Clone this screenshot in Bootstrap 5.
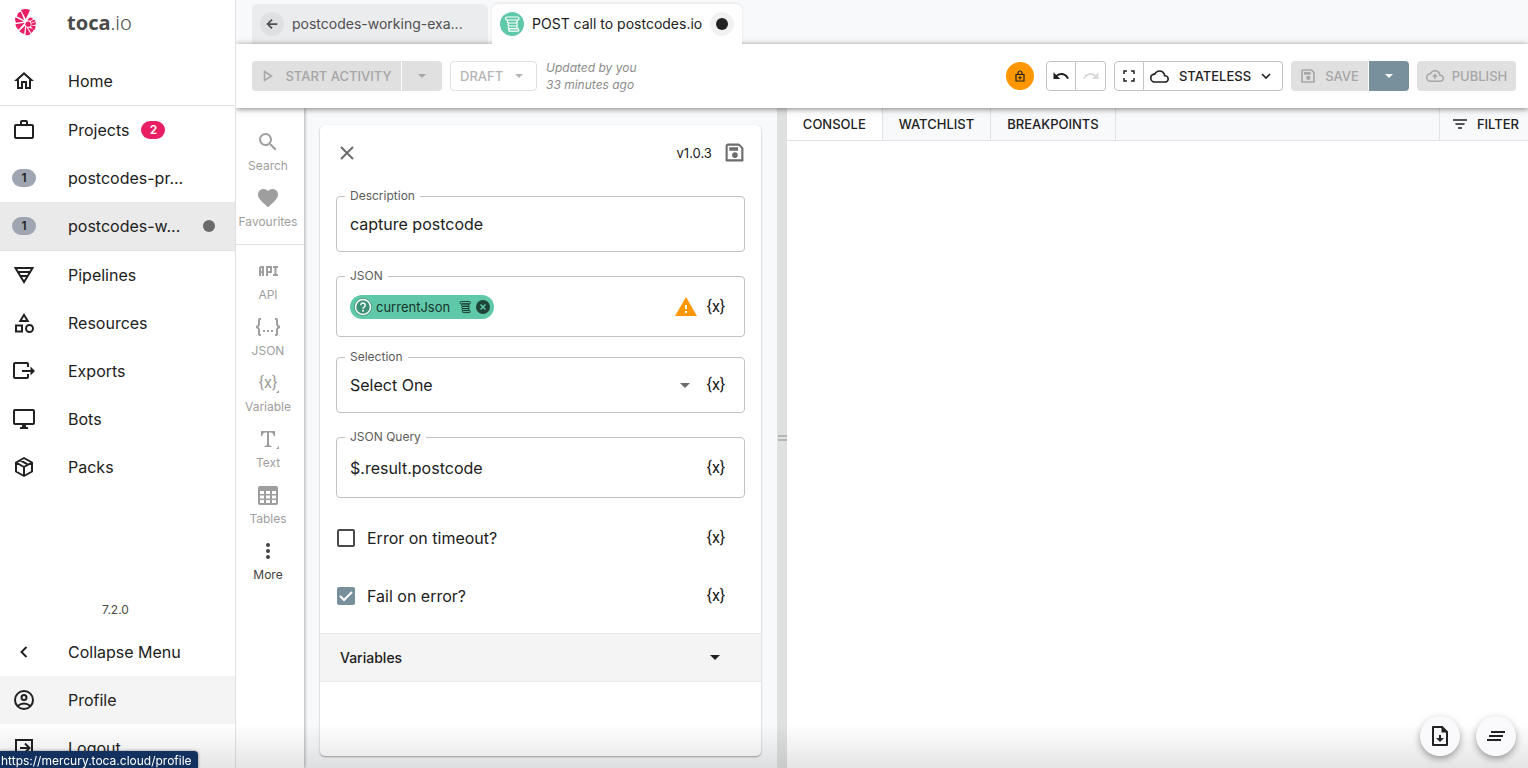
<!DOCTYPE html>
<html lang="en">
<head>
<meta charset="utf-8">
<meta name="viewport" content="width=device-width, initial-scale=1">
<title>toca.io - POST call to postcodes.io</title>
<link href="https://cdn.jsdelivr.net/npm/bootstrap@5.3.0/dist/css/bootstrap.min.css" rel="stylesheet">
<style>
  body { font-family: Inter, "Liberation Sans", sans-serif; font-size: 16px; line-height: 24px; color: #212121; background: #fff; white-space: nowrap; }
  a { color: inherit; text-decoration: none; }
  button { color: inherit; }
  svg { display: block; flex: none; fill: currentColor; }
  .ln { fill: none; stroke: currentColor; stroke-width: 2; }
  .i24 { width: 24px; height: 24px; }
  .i16 { width: 16px; height: 16px; }

  /* sidebar */
  .side { width: 236px; flex: none; border-right: 1px solid #e0e0e3; }
  .brand { height: 57px; padding: 0 12px 12px 15px; gap: 31px; color: #4a4a4a; font-family: "Noto Sans", sans-serif; font-size: 20px; }
  .brand svg { fill: #e91e63; }
  .item { height: 48px; padding: 0 12px; gap: 32px; }
  .item.on { background: #eaeaea; }
  .item.hov { background: #f4f4f4; }
  .rule { border-bottom: 1px solid #e2e2e5; }
  .pill { width: 24px; height: 18px; border-radius: 9px; font-size: 12px; line-height: 18px; font-weight: 600; text-align: center; background: #9fa6b2; flex: none; }
  .pill.hot { background: #e91e63; color: #fff; }
  .dot { width: 12px; height: 12px; border-radius: 50%; background: #6b6b6b; }
  .foot { margin-bottom: -4px; }
  .ver { font-size: 12px; color: #4a4a4a; padding: 0 4px 6px 0; }

  /* tabs and toolbar */
  .tabs { height: 44px; background: #f8f9fb; padding: 4px 16px 0; gap: 4px; }
  .tab { border-radius: 6px 6px 0 0; font-size: 14px; padding: 0 8px; gap: 8px; height: 40px; }
  .tab.back { background: #ebecee; color: #4f4f4f; width: 236px; }
  .tab.cur { background: #fff; width: 250px; position: relative; z-index: 3; box-shadow: 0 -1px 3px rgba(0,0,0,.08); }
  .disc { width: 24px; height: 24px; border-radius: 50%; flex: none; background: #dfe0e2; }
  .disc.green { background: #5fc8a8; color: #fff; }
  .disc.faint { background: #f1f1f1; }
  .disc .dot { background: #212121; }
  .bar { min-height: 64px; background: #fff; padding: 0 12px 0 16px; position: relative; z-index: 2; box-shadow: 0 1px 6px rgba(0,0,0,.5); }
  .tb { height: 30px; border: 0; border-radius: 4px; font-size: 13px; line-height: 30px; padding: 0 9px; font-weight: 500; background: #e0e0e0; color: #a6a6a6; display: flex; align-items: center; justify-content: center; }
  .tb.line { background: #fff; border: 1px solid #c4c4c4; color: #212121; }
  .tb.pale { border-color: #e0e0e0; color: #b5b5b5; width: 87px; }
  .tb.sq { width: 30px; padding: 0; }
  .tb.off { color: #dadada; }
  .tb.start { width: 149px; gap: 10px; }
  .tb.state { width: 139px; padding: 0 11px 0 6px; }
  .tb.save { width: 77px; gap: 9px; }
  .tb.pub { width: 99px; gap: 8px; }
  .l0 { border-top-left-radius: 0; border-bottom-left-radius: 0; }
  .r0 { border-top-right-radius: 0; border-bottom-right-radius: 0; }
  .tb.caret { width: 40px; margin-left: 1px; }
  .tb.slate { background: #78909c; color: #fff; }
  .note { font-size: 12px; line-height: 17px; font-style: italic; color: #8c8c8c; margin-left: 9px; }
  .lock { width: 28px; height: 28px; border: 0; border-radius: 50%; background: #ff9800; }

  /* tool strip */
  .strip { width: 68px; flex: none; padding-top: 16px; background: #fff; box-shadow: 1px 0 3px rgba(0,0,0,.3); position: relative; z-index: 1; }
  .tool { height: 56px; width: 64px; border: 0; background: none; padding: 6px 0; gap: 4px; font-size: 12px; line-height: 16px; color: #9e9e9e; }
  .tool.dark { color: #424242; }
  .glyph { height: 24px; line-height: 24px; font-size: 16px; font-family: Roboto, sans-serif; }
  .corner { position: absolute; right: -2px; bottom: 2px; width: 3px; height: 3px; }

  /* properties panel */
  .panel { flex: 0 0 36.6%; min-width: 0; background: #f8f9fb; padding: 17px 16px 12px; }
  .sheet { background: #fff; border-radius: 5px; box-shadow: 0 1px 2px rgba(0,0,0,.35); }
  .head { height: 55px; padding: 0 16px; }
  .version { font-size: 13px; }
  .grey { color: #6b6b6b; }
  .amber { color: #ff9800; }
  .fields { padding: 16px 16px 0; }
  .fld { position: relative; border: 1px solid #c2c2c2; border-radius: 4px; height: 56px; padding: 0 14px 0 13px; display: flex; align-items: center; margin-bottom: 24px; }
  .fld.tall { height: 61px; }
  .fld.near { margin-bottom: 20px; }
  .fld > label, .fld > .lbl { position: absolute; left: 8px; top: -9px; padding: 0 5px; font-size: 12px; line-height: 16px; background: #fff; color: #5c5c5c; }
  .fld input, .fld select { border: 0; background: none; outline: 0; padding: 0; flex: 1; min-width: 0; color: #212121; appearance: none; }
  .drop { margin-right: 12px; }
  .vx { border: 0; background: none; padding: 0; width: 28px; line-height: 24px; font-family: Roboto, sans-serif; font-size: 16px; text-align: center; }
  .chip { height: 24px; border-radius: 12px; background: #5fc8a8; padding: 0 4px; gap: 4px; font-size: 13px; color: #17352c; }
  .checks { padding: 11px 0 8px; }
  .opt { height: 58px; padding-right: 15px; gap: 12px; }
  .opt input { appearance: none; width: 18px; height: 18px; border: 2px solid #4a4a4a; border-radius: 2px; margin: 0 0 0 1px; }
  .opt input:checked { border: 0; background: #78909c url("data:image/svg+xml,%3Csvg xmlns='http://www.w3.org/2000/svg' viewBox='0 0 18 18'%3E%3Cpath d='M3 9l4 4 8-8' fill='none' stroke='white' stroke-width='2'/%3E%3C/svg%3E"); }
  .vars { height: 49px; border: 0; border-top: 1px solid #e8e8e8; border-bottom: 1px solid #e8e8e8; background: #f4f4f4; padding: 0 41px 0 20px; font-size: 14px; font-weight: 500; width: 100%; }
  .split { width: 10px; flex: none; background: #dfe1e0; }
  .grip { height: 6px; width: 9px; border-top: 2px solid #b5b5b5; border-bottom: 2px solid #b5b5b5; }

  /* console */
  .cons { flex: 1 1 0; min-width: 0; }
  .ctabs { height: 33px; background: #f8f9fb; border-bottom: 1px solid #e2e2e6; }
  .ctabs button { border: 0; border-right: 1px solid #e2e2e6; background: none; font-size: 13px; font-weight: 500; padding: 0 16px; line-height: 32px; }
  .ctabs .act { background: #fff; }
  .ctabs .flt { border-right: 0; border-left: 1px solid #e2e2e6; padding: 0 9px 0 12px; gap: 9px; }
  .fabs { position: fixed; right: 12px; bottom: 12px; gap: 16px; z-index: 6; }
  .fab { width: 40px; height: 40px; border: 0; border-radius: 50%; background: #fafafc; box-shadow: 0 3px 7px rgba(0,0,0,.35); }
  .fade-end { position: fixed; left: 0; right: 0; bottom: 0; height: 44px; background: linear-gradient(rgba(0,0,0,0), rgba(0,0,0,.1)); z-index: 5; pointer-events: none; }
  .status { position: fixed; left: 0; bottom: 0; height: 17px; width: 198px; padding-left: 1px; background: #12315f; color: #fff; font-size: 12px; line-height: 20px; border-radius: 0 4px 0 0; z-index: 7; box-shadow: 0 0 3px rgba(0,0,0,.5); overflow: hidden; }
</style>
</head>
<body class="vh-100 overflow-hidden d-flex">
<svg class="d-none">
  <symbol id="scroll" viewBox="0 0 18 18"><path d="M4 2h10.500a1.500 1.500 0 0 1 0 3H4a1.500 1.500 0 0 1 0-3zM5.500 5H14v3H6.500A1.500 1.500 0 0 1 5.500 5zM6.500 8H14v3H6.500a1.500 1.500 0 0 1 0-3zM6.500 11H14v2.600H6.500a1.300 1.300 0 0 1 0-2.600zM7 13.600h7.500a1.300 1.300 0 0 1 0 2.600H7a1.300 1.300 0 0 1 0-2.600z" fill="none" stroke="currentColor" stroke-width="1.200"/></symbol>
  <symbol id="save" viewBox="0 0 24 24"><path d="M4 3h13l4 4v14H3V4z" fill="none" stroke="currentColor" stroke-width="2.400" stroke-linejoin="round"/><path d="M6 6h10v4H6z"/><circle cx="12.500" cy="15" r="3.200"/></symbol>
  <symbol id="down" viewBox="0 0 10 5"><path d="M0 0h10L5 5z"/></symbol>
</svg>

<aside class="side d-flex flex-column overflow-hidden">
  <a href="#" class="brand d-flex align-items-center">
    <svg width="21" height="27" viewBox="0 0 64 82"><path d="M18 3Q32-3 46 3L33 30zM9 13q4-5 9-5l10 26L6 22zM1 25l26 13-24 4q-4-8-2-17zM1 46l29-4L10 63Q3 56 1 46zM31 50l-3 26q-8-1-15-9zM34 54l14 22q-8 5-16 4zM39 56l14 4q6 7-3 13zM47 50l16 2q0 9-6 13zM50 44l13-5v9l-13 1zM48 38l10-6q4 3 5 5l-14 5zM37 34l8-8q8 0 10 4l-8 6z"/><circle cx="40" cy="46" r="8"/></svg>
    <span><b class="fw-bold">toca</b><span class="fw-light">.io</span></span>
  </a>
  <nav>
    <a href="#" class="item d-flex align-items-center"><svg class="i24" viewBox="0 0 24 24"><path d="M12 5.690l5 4.500V18h-2v-6H9v6H7v-7.810l5-4.500M12 3L2 12h3v8h6v-6h2v6h6v-8h3L12 3z"/></svg>Home</a>
    <div class="rule"></div>
    <a href="#" class="item d-flex align-items-center"><svg class="i24" viewBox="0 0 24 24"><path d="M14 6V4h-4v2h4zM4 8v11h16V8H4zm16-2c1.110 0 2 .89 2 2v11c0 1.110-.89 2-2 2H4c-1.110 0-2-.89-2-2V8c0-1.110.89-2 2-2h4V4c0-1.110.89-2 2-2h4c1.110 0 2 .89 2 2v2h4z"/></svg><span class="d-flex align-items-center gap-2">Projects<span class="pill hot ms-1">2</span></span></a>
    <a href="#" class="item d-flex align-items-center"><span class="pill">1</span>postcodes-pr...</a>
    <a href="#" class="item on d-flex align-items-center"><span class="pill">1</span><span class="d-flex align-items-center flex-grow-1">postcodes-w...<span class="dot ms-auto me-2"></span></span></a>
    <div class="rule"></div>
    <a href="#" class="item d-flex align-items-center"><svg class="i24" viewBox="0 0 24 24"><path class="ln" d="M3.500 5h17L12 19zM5 9h14M8 13h8"/></svg>Pipelines</a>
    <a href="#" class="item d-flex align-items-center"><svg class="i24" viewBox="0 0 24 24"><path d="M12 2l-5.500 9h11L12 2zm0 3.840L13.930 9h-3.870L12 5.840zM17.500 13a4.500 4.500 0 1 0 0 9 4.500 4.500 0 0 0 0-9zm0 7a2.500 2.500 0 1 1 0-5 2.500 2.500 0 0 1 0 5zM3 21.500h8v-8H3v8zm2-6h4v4H5v-4z"/></svg>Resources</a>
    <a href="#" class="item d-flex align-items-center"><svg class="i24" viewBox="0 0 24 24"><path class="ln" d="M16 8V5q0-1-1-1H3Q2 4 2 5v13q0 1 1 1h12q1 0 1-1v-3M10 12h9"/><path d="M18.500 7.500L23 12l-4.500 4.500z"/></svg>Exports</a>
    <a href="#" class="item d-flex align-items-center"><svg class="i24" viewBox="0 0 24 24"><path d="M21 16H3V4h18m0-2H3c-1.110 0-2 .89-2 2v12a2 2 0 0 0 2 2h7v2H8v2h8v-2h-2v-2h7a2 2 0 0 0 2-2V4c0-1.110-.9-2-2-2z"/></svg>Bots</a>
    <a href="#" class="item d-flex align-items-center"><svg class="i24" viewBox="0 0 24 24"><path class="ln" stroke-linejoin="round" d="M12 3l8 4.500v9L12 21l-8-4.500v-9zM4 7.500l8 4.500 8-4.500M12 12v9M8 5.200l8 4.500"/></svg>Packs</a>
  </nav>
  <div class="foot mt-auto">
    <div class="ver text-center">7.2.0</div>
    <a href="#" class="item d-flex align-items-center"><svg class="i24" viewBox="0 0 24 24"><path class="ln" d="M14.500 7l-5 5 5 5"/></svg>Collapse Menu</a>
    <a href="#" class="item hov d-flex align-items-center"><svg class="i24" viewBox="0 0 24 24"><g class="ln"><circle cx="12" cy="12" r="9"/><circle cx="12" cy="9.500" r="2.500"/><path d="M5.500 18q6.500-5 13 0"/></g></svg>Profile</a>
    <a href="#" class="item d-flex align-items-center"><svg class="i24" viewBox="0 0 24 24"><path class="ln" d="M4 9V4h16v16H4v-5M4 9v8M8 12h10M13 7.500l4.500 4.500-4.500 4.500"/></svg>Logout</a>
  </div>
</aside>

<main class="flex-fill overflow-hidden d-flex flex-column">
  <div class="tabs d-flex">
    <a href="#" class="tab back d-flex align-items-center"><span class="disc d-flex align-items-center justify-content-center"><svg width="14" height="14" viewBox="0 0 16 16"><path class="ln" d="M14 8H3M8 3L3 8l5 5"/></svg></span>postcodes-working-exa...</a>
    <a href="#" class="tab cur d-flex align-items-center"><span class="disc green d-flex align-items-center justify-content-center"><svg width="18" height="18"><use href="#scroll"/></svg></span>POST call to postcodes.io<span class="disc faint ms-auto d-flex align-items-center justify-content-center"><span class="dot"></span></span></a>
  </div>

  <div class="bar d-flex align-items-center">
    <button class="tb r0 start"><svg width="14" height="14" viewBox="0 0 14 14"><path d="M3.500 2.500l7 4.500-7 4.500z" fill="none" stroke="currentColor" stroke-width="1.500"/></svg>START ACTIVITY</button>
    <button class="tb l0 caret" aria-label="Start options"><svg width="8" height="4"><use href="#down"/></svg></button>
    <button class="tb line pale ms-2 justify-content-between">DRAFT<svg class="me-1" width="8" height="4"><use href="#down"/></svg></button>
    <div class="note">Updated by you<br>33 minutes ago</div>

    <div class="ms-auto d-flex align-items-center gap-2">
      <button class="lock d-flex align-items-center justify-content-center me-1" aria-label="Locked"><svg width="10" height="12" viewBox="0 0 10 12"><path d="M1 4.500h8v6.500H1zM3 4.500V3a2 2 0 0 1 4 0v1.500" fill="none" stroke="currentColor" stroke-width="1.200"/><path d="M4.500 6h1v1.200h1.200v1H5.500v1.300h-1V8.200H3.300v-1h1.200z"/></svg></button>
      <div class="d-flex"><button class="tb line r0 sq" aria-label="Undo"><svg width="18" height="18" viewBox="0 0 24 24"><path id="undo" d="M12.500 8c-2.650 0-5.050.99-6.900 2.600L2 7v9h9l-3.620-3.620c1.390-1.160 3.160-1.880 5.120-1.880 3.540 0 6.550 2.310 7.600 5.500l2.370-.78C21.080 11.030 17.150 8 12.500 8z"/></svg></button><button class="tb line l0 sq off border-start-0" aria-label="Redo"><svg width="18" height="18" viewBox="0 0 24 24"><use href="#undo" transform="matrix(-1 0 0 1 24 0)"/></svg></button></div>
      <div class="d-flex"><button class="tb line r0 sq" aria-label="Full screen"><svg width="12" height="12" viewBox="0 0 12 12"><path class="ln" style="stroke-width:1.500" d="M1 4V1h3M8 1h3v3M11 8v3H8M4 11H1V8"/></svg></button><button class="tb line l0 state border-start-0 justify-content-between"><svg width="19" height="19" viewBox="0 0 24 24"><path id="cloud" d="M19.350 10.040A7.490 7.490 0 0 0 12 4C9.110 4 6.600 5.640 5.350 8.040A6 6 0 0 0 0 14c0 3.310 2.690 6 6 6h13c2.760 0 5-2.240 5-5 0-2.640-2.050-4.780-4.650-4.960zM19 18H6a4 4 0 0 1 0-8h.71C7.370 7.690 9.480 6 12 6c3.040 0 5.500 2.460 5.500 5.500v.5H19a3 3 0 0 1 0 6z"/></svg>STATELESS<svg width="10" height="10" viewBox="0 0 10 10"><path class="ln" style="stroke-width:1.600" d="M1 3l4 4 4-4"/></svg></button></div>
      <div class="d-flex"><button class="tb r0 save"><svg width="16" height="16"><use href="#save"/></svg>SAVE</button><button class="tb l0 caret slate" aria-label="Save options"><svg width="8" height="4"><use href="#down"/></svg></button></div>
      <button class="tb pub"><svg width="18" height="18" viewBox="0 0 24 24"><use href="#cloud"/><path d="M8 13l4-4 4 4h-3v3h-2v-3z"/></svg>PUBLISH</button>
    </div>
  </div>

  <div class="d-flex flex-fill overflow-hidden">
    <div class="strip">
      <button class="tool d-flex flex-column align-items-center"><svg class="i24" viewBox="0 0 24 24"><path d="M15.500 14h-.79l-.28-.27A6.470 6.470 0 0 0 16 9.500 6.500 6.500 0 1 0 9.500 16c1.610 0 3.090-.59 4.230-1.570l.27.28v.79l5 4.990L20.490 19l-4.990-5zm-6 0a4.500 4.500 0 1 1 0-9 4.500 4.500 0 0 1 0 9z"/></svg>Search</button>
      <button class="tool d-flex flex-column align-items-center"><svg class="i24" viewBox="0 0 24 24"><path d="M12 21.350l-1.450-1.320C5.400 15.360 2 12.280 2 8.500 2 5.420 4.420 3 7.500 3c1.740 0 3.410.81 4.500 2.090C13.090 3.810 14.760 3 16.500 3 19.580 3 22 5.420 22 8.500c0 3.780-3.400 6.860-8.550 11.540L12 21.350z"/></svg>Favourites</button>
      <div class="rule my-2"></div>
      <button class="tool d-flex flex-column align-items-center"><svg class="i24" viewBox="0 0 24 24"><path class="ln" d="M4 17V9l1-1h2v9M4 13h3M11 17V8h4v5h-4M17 8h5M17 16h5M19.500 8v8"/></svg>API</button>
      <button class="tool d-flex flex-column align-items-center"><svg class="i24" viewBox="0 0 24 24"><path class="ln" d="M5 4H4Q3 4 3 5v4q0 2-3 3 3 1 3 3v4q0 1 1 1h1M19 4h1q1 0 1 1v4q0 2 3 3-3 1-3 3v4q0 1-1 1h-1"/><path d="M7 15h2v2H7zM11 15h2v2h-2zM15 15h2v2h-2z"/></svg>JSON</button>
      <button class="tool d-flex flex-column align-items-center"><span class="glyph position-relative">{x}<svg class="corner" viewBox="0 0 3 3"><path d="M3 0v3H0z"/></svg></span>Variable</button>
      <button class="tool d-flex flex-column align-items-center"><svg class="i24" viewBox="0 0 24 24"><path d="M5 4h14v5h-1.500q0-3.500-3-3.500H13V17q0 2 2.500 2v1h-7v-1Q11 19 11 17V5.500H9.500q-3 0-3 3.500H5zM23 19v3h-3z"/></svg>Text</button>
      <button class="tool d-flex flex-column align-items-center"><svg class="i24" viewBox="0 0 24 24"><path fill-rule="evenodd" d="M4 3h16a2 2 0 0 1 2 2v15a2 2 0 0 1-2 2H4a2 2 0 0 1-2-2V5a2 2 0 0 1 2-2zM4 8v3h4V8zM10 8v3h4V8zM16 8v3h4V8zM4 12.500v3h4v-3zM10 12.500v3h4v-3zM16 12.500v3h4v-3zM4 17v3h4v-3zM10 17v3h4v-3zM16 17v3h4v-3z"/></svg>Tables</button>
      <button class="tool dark d-flex flex-column align-items-center"><svg class="i24" viewBox="0 0 24 24"><circle cx="12" cy="6" r="2"/><circle cx="12" cy="12" r="2"/><circle cx="12" cy="18" r="2"/></svg>More</button>
    </div>

    <section class="panel d-flex">
      <form class="sheet flex-fill overflow-hidden">
        <div class="head d-flex align-items-center">
          <button type="button" class="border-0 bg-transparent p-0 grey" aria-label="Close"><svg width="22" height="22" viewBox="0 0 22 22"><path class="ln" d="M5 5l12 12M17 5L5 17"/></svg></button>
          <span class="version ms-auto me-2">v1.0.3</span>
          <svg class="grey ms-1" width="21" height="21"><use href="#save"/></svg>
        </div>
        <div class="fields">
          <div class="fld"><label for="desc">Description</label><input id="desc" value="capture postcode"></div>
          <div class="fld tall near"><span class="lbl">JSON</span>
            <span class="chip d-flex align-items-center"><svg width="18" height="18" viewBox="0 0 18 18"><circle cx="9" cy="9" r="9" fill="#3d8f78"/><circle cx="9" cy="9" r="7.500" fill="none" stroke="#fff" stroke-width="1.500"/><path d="M6.800 7.200a2.200 2.200 0 1 1 3.300 1.900Q9 9.700 9 10.700" fill="none" stroke="#fff" stroke-width="1.500"/><circle cx="9" cy="12.800" r="1" fill="#fff"/></svg>currentJson<svg class="ms-1" width="14" height="14"><use href="#scroll"/></svg><svg width="14" height="14" viewBox="0 0 14 14"><circle cx="7" cy="7" r="7" fill="#1e4438"/><path d="M4.500 4.500l5 5M9.500 4.500l-5 5" stroke="#5fc8a8" stroke-width="1.500"/></svg></span>
            <svg class="amber ms-auto me-1" width="24" height="24" viewBox="0 0 24 24"><path d="M1 21h22L12 2 1 21zm12-3h-2v-2h2v2zm0-4h-2v-4h2v4z"/></svg>
            <button type="button" class="vx">{x}</button></div>
          <div class="fld"><label for="sel">Selection</label><select id="sel"><option>Select One</option></select><svg class="drop grey" width="10" height="5"><use href="#down"/></svg><button type="button" class="vx">{x}</button></div>
          <div class="fld tall mb-0"><label for="qry">JSON Query</label><input id="qry" value="$.result.postcode"><button type="button" class="vx">{x}</button></div>
          <div class="checks">
            <div class="opt d-flex align-items-center"><input type="checkbox" id="c1"><label for="c1">Error on timeout?</label><button type="button" class="vx ms-auto">{x}</button></div>
            <div class="opt d-flex align-items-center"><input type="checkbox" id="c2" checked><label for="c2">Fail on error?</label><button type="button" class="vx ms-auto">{x}</button></div>
          </div>
        </div>
        <button type="button" class="vars d-flex align-items-center justify-content-between">Variables<svg width="10" height="5"><use href="#down"/></svg></button>
      </form>
    </section>

    <div class="split d-flex align-items-center justify-content-end"><div class="grip"></div></div>

    <section class="cons">
      <div class="ctabs d-flex">
        <button class="act">CONSOLE</button><button>WATCHLIST</button><button>BREAKPOINTS</button>
        <button class="flt ms-auto d-flex align-items-center"><svg width="16" height="16" viewBox="0 0 16 16"><path class="ln" style="stroke-width:1.500" d="M1 4h14M3.500 8h9M6 12h4"/></svg>FILTER</button>
      </div>
    </section>
  </div>
</main>

<div class="fade-end"></div>
<div class="fabs d-flex">
  <button class="fab d-flex align-items-center justify-content-center" aria-label="Download file"><svg width="20" height="22" viewBox="0 0 20 22"><path class="ln" d="M3 2h9l5 5v13H3z" stroke-linejoin="round"/><path d="M11.500 1v6.500H18zM9 10h2v3h3l-4 4-4-4h3z"/></svg></button>
  <button class="fab d-flex align-items-center justify-content-center" aria-label="Clear console"><svg width="20" height="20" viewBox="0 0 20 20"><path class="ln" d="M5 6h14M3 10h14M1 14h14"/></svg></button>
</div>
<div class="status">https://mercury.toca.cloud/profile</div>
<script src="https://cdn.jsdelivr.net/npm/bootstrap@5.3.0/dist/js/bootstrap.bundle.min.js"></script>
</body>
</html>
